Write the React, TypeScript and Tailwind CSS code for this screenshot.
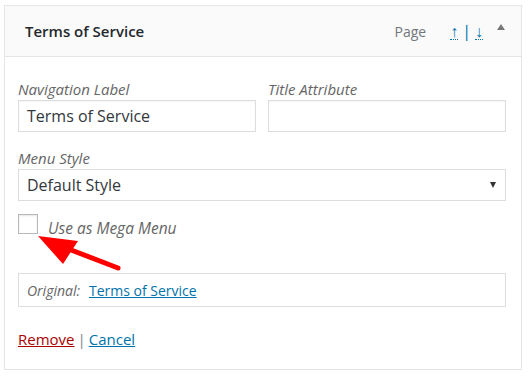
import { useState } from 'react'

const font = { fontFamily: '"Open Sans", "Noto Sans", sans-serif' }

function Field({ label, value, className }: { label: string; value: string; className?: string }) {
  return (
    <div className={className}>
      <div className="h-[21px] text-[15px] italic leading-[21px] text-[#666]">{label}</div>
      <div className="flex h-[32px] items-center border border-[#ddd] bg-white px-[8px] text-[16px] text-[#32373c] shadow-[inset_0_1px_2px_rgba(0,0,0,0.04)]">
        {value}
      </div>
    </div>
  )
}

export default function App() {
  const [mega, setMega] = useState(false)

  return (
    <div className="relative h-[381px] w-[529px] bg-white" style={font}>
      <div className="ml-[4px] mt-[5px] w-[518px] border border-[#e5e5e5]">
        <div className="relative flex h-[51px] items-center overflow-hidden border-b border-[#e5e5e5] bg-[#fafafa] pl-[20px] pr-[16px]">
          <div className="flex-1 text-[15px] font-semibold text-[#23282d]">Terms of Service</div>
          <span className="text-[14px] text-[#72777c]">Page</span>
          <span className="ml-[24px] flex items-center text-[16px] leading-none text-[#0073aa]">
            <span className="border-b border-dotted border-[#0073aa]">↑</span>
            <span className="mx-[4px] text-[#0073aa]">|</span>
            <span className="border-b border-dotted border-[#0073aa]">↓</span>
          </span>
          <span className="ml-[14px] mt-[-8px] h-0 w-0 border-x-[4px] border-b-[6px] border-x-transparent border-b-[#777]" />
          <span className="absolute right-[20px] top-[47px] text-[13px] text-[#999]">Edit</span>
        </div>

        <div className="px-[13px] pb-[19px] pt-[22px]">
          <div className="flex gap-[12px]">
            <Field label="Navigation Label" value="Terms of Service" className="w-[238px]" />
            <Field label="Title Attribute" value="" className="w-[238px]" />
          </div>

          <div className="mt-[16px]">
            <div className="h-[21px] text-[15px] italic leading-[21px] text-[#666]">Menu Style</div>
            <div className="flex h-[32px] w-[488px] items-center justify-between border border-[#ddd] bg-white pl-[8px] pr-[9px] text-[16px] text-[#32373c]">
              <span>Default Style</span>
              <span className="h-0 w-0 border-x-[3.5px] border-t-[6px] border-x-transparent border-t-[#333]" />
            </div>
          </div>

          <label className="mt-[13px] flex h-[20px] items-center gap-[10px]">
            <span
              onClick={() => setMega(!mega)}
              className="h-[20px] w-[20px] border border-[#b4b9be] bg-white shadow-[inset_0_1px_2px_rgba(0,0,0,0.1)]"
            >
              {mega ? '✓' : ''}
            </span>
            <span className="mt-[10px] text-[15.5px] italic text-[#666]">Use as Mega Menu</span>
          </label>

          <div className="mt-[39px] flex h-[34px] w-[488px] items-center border border-[#ddd] px-[8px] text-[14px]">
            <span className="italic text-[#666]">Original:</span>
            <a href="#" className="ml-[9px] text-[#0073aa] underline">Terms of Service</a>
          </div>

          <div className="mt-[22px] text-[15px] leading-[21px]">
            <a href="#" className="text-[#a00] underline">Remove</a>
            <span className="mx-[3px] text-[#82878c]">|</span>
            <a href="#" className="text-[#0073aa] underline">Cancel</a>
          </div>
        </div>
      </div>

      <svg className="pointer-events-none absolute left-0 top-0" width="529" height="381">
        <line x1="118" y1="263" x2="66" y2="243" stroke="#ff0000" strokeWidth="5" strokeLinecap="round" />
        <polygon points="38,231 78,236 63,259" fill="#ff0000" />
      </svg>
    </div>
  )
}
